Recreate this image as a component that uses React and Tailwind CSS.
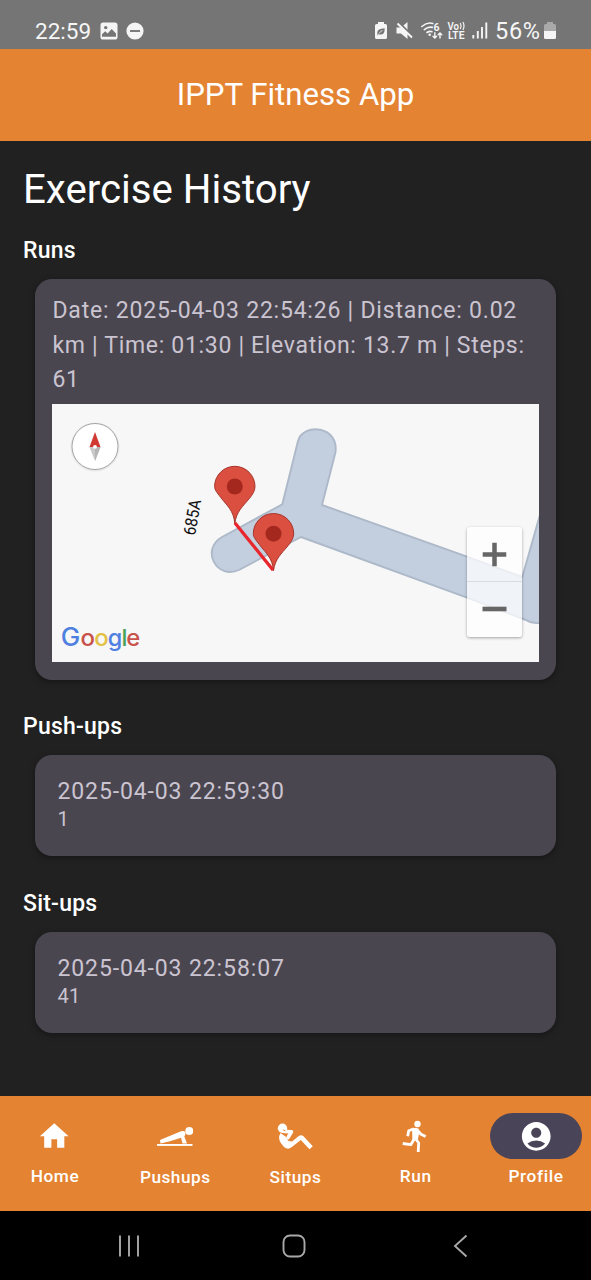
import React from "react";

function StatusBar() {
  return (
    <div className="flex h-[49px] items-start justify-between bg-[#757575] pl-[35px] pr-[35px] pt-[18px] text-[#f5f5f5]">
      <div className="flex h-[26px] items-center">
        <span className="w-[65px] text-[22.5px] leading-[26px]">22:59</span>
        <svg className="h-[18px] w-[18px]" viewBox="0 0 18 18">
          <rect x="0.5" y="0.5" width="17" height="17" rx="2.6" fill="#f5f5f5" />
          <circle cx="5.7" cy="5.6" r="1.7" fill="#757575" />
          <path d="M2 14.8v-2.6l3.2-3 2.4 2.2 4.1-4.3 4.3 4.5v3.2z" fill="#757575" />
        </svg>
        <svg className="ml-2 h-[18px] w-[18px]" viewBox="0 0 18 18">
          <circle cx="9" cy="9" r="8.6" fill="#f5f5f5" />
          <path d="M4 9h10" stroke="#757575" strokeWidth="1.9" />
        </svg>
      </div>
      <div className="flex h-[26px] items-center">
        <svg className="h-[26px] w-[121px]" viewBox="374 18 121 26">
          <path d="M378 22h6v2h1.500q1.500 0 1.500 1.500v12q0 1.500-1.500 1.500h-9q-1.500 0-1.500-1.500v-12q0-1.500 1.500-1.500h1.500z" fill="#f5f5f5" />
          <path d="M377.300 32.500q0-4 7.400-4.300q.2 6.400-4 6.400q-1.500 0-1.900-.6l-1.300 1.400" fill="#757575" />
          <path d="M379 33.500q1.500-2.500 3.500-3" stroke="#f5f5f5" strokeWidth=".8" fill="none" />
          <path d="M396.500 27.500h4.500l6.500-5.500v17l-6.500-5.500h-4.500z" fill="#f5f5f5" />
          <path d="M397.500 21l15 15" stroke="#757575" strokeWidth="2" />
          <path d="M397.500 23.500l14.500 14" stroke="#f5f5f5" strokeWidth="2" />
          <g fill="none" stroke="#f5f5f5" strokeWidth="1.600" strokeLinecap="round">
            <path d="M421.800 26.500q5.500-4.700 11-3M424.300 29.600q4-3.200 8-2.200M427 32.500q2.500-1.800 5-.8" />
            <path d="M434.800 32.800v5m-1.800-1.600 1.800 1.800 1.800-1.800M440 38v-5m-1.800 1.700 1.800-1.800 1.800 1.800" strokeWidth="1.400" />
          </g>
          <circle cx="429.700" cy="34.800" r="1.300" fill="#f5f5f5" />
          <text x="433.500" y="31" fontSize="10.500" fontWeight="700" fill="#f5f5f5">6</text>
          <text x="447.500" y="29.500" fontSize="10" fontWeight="600" fill="#f5f5f5" textLength="11.500" lengthAdjust="spacingAndGlyphs">Vo</text>
          <path d="M460.300 23q1.700 3 0 6M462.900 22q2.200 4 0 8" fill="none" stroke="#f5f5f5" strokeWidth="1.200" />
          <text x="448" y="39" fontSize="10.500" fontWeight="600" fill="#f5f5f5" textLength="16.500" lengthAdjust="spacingAndGlyphs">LTE</text>
          <path d="M473.300 35v3.500M477.800 31v7.500M482 27v11.500M486.300 22.500v16" stroke="#f5f5f5" strokeWidth="1.900" />
        </svg>
        <span className="w-[48px] whitespace-nowrap text-[23.5px] leading-[26px] tracking-[0.7px]">56%</span>
        <svg className="ml-px h-[18px] w-[12px]" viewBox="0 0 12 18">
          <path d="M3 0h6v2h1.500q1.500 0 1.500 1.500v6H0v-6q0-1.500 1.500-1.500H3z" fill="#a9a9a9" />
          <path d="M0 9h12v6.500q0 1.500-1.500 1.500h-9q-1.500 0-1.500-1.500z" fill="#f5f5f5" />
        </svg>
      </div>
    </div>
  );
}

function Pin({ x, y }) {
  return (
    <g transform={`translate(${x} ${y})`}>
      <path
        d="M0 37C-1 24-8 19-14 11C-18 6-20.200 3-20.200 0A20.200 20.200 0 0 1 20.200 0C20.200 4 18 8 14.500 12C8 20 1.500 25 0 37Z"
        fill="#db4f40"
        stroke="#a6352b"
        strokeWidth="1"
      />
      <circle r="8" fill="#a5281f" />
    </g>
  );
}

function RunMap() {
  return (
    <div className="relative h-[258px] w-[487px] overflow-hidden bg-[#f7f7f7]">
      <svg className="block h-[258px] w-[487px]" viewBox="52 404 487 258">
        <path
          d="M222 537L282.300 504.300L298 441C303 422 340 426 335.300 453L322 505L467 556.700L522.300 577L545 497V622Q534 625 526 620L467 597.700L301 537L239 570C217 580 200 550 222 537Z"
          fill="#c3cedf"
          stroke="#adb9c9"
          strokeWidth="1.900"
          strokeLinejoin="round"
        />
        <text transform="translate(195 536) rotate(-80)" fontSize="17" fill="#111" textLength="36" lengthAdjust="spacingAndGlyphs">685A</text>
        <path d="M235 523L273 570" stroke="#e8282e" strokeWidth="3.200" />
        <Pin x={234.800} y={486.500} />
        <Pin x={273.500} y={533.700} />
        <path d="M235 523L273 570" stroke="#e8282e" strokeWidth="2.600" />
        <circle cx="95" cy="447" r="24.500" fill="#000" opacity=".06" />
        <circle cx="95" cy="446.500" r="23" fill="#fff" stroke="#a5a5a5" strokeWidth="1" />
        <path d="M95 432L100.500 447H89.500Z" fill="#d03a32" />
        <path d="M95 461L100.500 447H89.500Z" fill="#c9c9c9" />
        <path d="M95 461V447H100.500Z" fill="#b5b5b5" />
        <circle cx="95" cy="446.800" r="1.900" fill="#fff" />
        <g fontFamily="Inter, sans-serif" fontSize="23.500" fontWeight="500">
          <text x="60.800" y="645.500" fill="#4f80e1" fontSize="25" textLength="19.500" lengthAdjust="spacingAndGlyphs">G</text>
          <text x="80.500" y="645.500" fill="#c9524b" textLength="14.500" lengthAdjust="spacingAndGlyphs">o</text>
          <text x="94.200" y="645.500" fill="#e3c145" textLength="14.500" lengthAdjust="spacingAndGlyphs">o</text>
          <text x="107.800" y="645.500" fill="#4f80e1" textLength="14.500" lengthAdjust="spacingAndGlyphs">g</text>
          <text x="121.400" y="645.500" fill="#4aa256">l</text>
          <text x="126.200" y="645.500" fill="#c9524b" textLength="14" lengthAdjust="spacingAndGlyphs">e</text>
        </g>
      </svg>
      <div className="absolute right-[17px] bottom-[25px] flex h-[110px] w-[55px] flex-col divide-y divide-[#d8dbdf] rounded-[3px] bg-white/75 text-[#666] shadow-[0_1px_3px_rgba(0,0,0,0.35)]">
        <svg className="h-[55px] w-[55px]" viewBox="0 0 55 55">
          <path d="M15.500 28h24M27.500 16v24" stroke="#666" strokeWidth="4.600" />
        </svg>
        <svg className="h-[55px] w-[55px]" viewBox="0 0 55 55">
          <path d="M15.500 27h24" stroke="#666" strokeWidth="4.600" />
        </svg>
      </div>
    </div>
  );
}

function RepCard({ date, count }) {
  return (
    <div className="ml-[11.5px] h-[101px] w-[521.5px] rounded-[17px] bg-[#4a4650] pl-[23px] pt-[20px] text-[#cac4d0] shadow-[0_2px_6px_rgba(0,0,0,0.35)]">
      <p className="text-[23px] leading-[34px] tracking-[0.88px]">{date}</p>
      <p className="-mt-[2px] text-[20px] leading-[24px] tracking-[0.36px]">{count}</p>
    </div>
  );
}

function NavItem({ label, active, low, children }) {
  return (
    <div className="flex w-[109px] flex-col items-center pt-[17px] text-white">
      <div className={active ? "flex h-[46px] w-[92px] items-center justify-center rounded-full bg-[#4a4458] pl-px" : "flex h-[46px] w-[92px] items-center justify-center"}>
        {children}
      </div>
      <span className={low ? "mt-[7px] pl-px text-[17.25px] leading-[23px] font-medium tracking-[0.5px]" : "mt-[6px] pl-px text-[17.25px] leading-[23px] font-medium tracking-[0.6px]"}>
        {label}
      </span>
    </div>
  );
}

const ICON = "h-[34.5px] w-[34.5px] fill-white";

export default function App() {
  return (
    <div className="flex h-[1280px] w-[591px] flex-col overflow-hidden bg-[#212121] font-[Roboto,sans-serif] text-white">
      <StatusBar />
      <header className="flex h-[91.5px] items-center justify-center bg-[#e48332]">
        <h1 className="text-[31.200px] leading-[40px]">IPPT Fitness App</h1>
      </header>
      <main className="flex-1 pl-[23px]">
        <h2 className="pt-[23px] text-[40.200px] leading-[52px]">Exercise History</h2>
        <h3 className="mt-[18px] text-[23px] leading-[34.5px] font-medium tracking-[0.22px]">Runs</h3>
        <section className="mt-[11px] ml-[11.5px] h-[401px] w-[521.5px] rounded-[17px] bg-[#4a4650] pl-[17.5px] pt-[15px] shadow-[0_2px_6px_rgba(0,0,0,0.35)]">
          <p className="h-[110px] w-[487px] pl-[0.5px] text-[23px] leading-[34.5px] tracking-[0.68px] text-[#cac4d0]">
            <span className="tracking-[0.78px]">Date: 2025-04-03 22:54:26 | Distance: 0.02</span>{" "}
            km | Time: 01:30 | Elevation: 13.7 m | Steps: 61
          </p>
          <RunMap />
        </section>
        <h3 className="mt-[30px] mb-[10.5px] text-[23px] leading-[34.5px] font-medium tracking-[0.22px]">Push-ups</h3>
        <RepCard date="2025-04-03 22:59:30" count="1" />
        <h3 className="mt-[31px] mb-[10.5px] text-[23px] leading-[34.5px] font-medium tracking-[0.22px]">Sit-ups</h3>
        <RepCard date="2025-04-03 22:58:07" count="41" />
      </main>
      <nav className="flex h-[115px] shrink-0 justify-between bg-[#e48332] pr-px">
        <NavItem label="Home">
          <svg className={ICON} viewBox="0 0 24 24"><path d="M10 20v-6h4v6h5v-8h3L12 3 2 12h3v8z" /></svg>
        </NavItem>
        <NavItem label="Pushups" low>
          <svg className="h-[34px] w-[36px]" viewBox="157 1119 36 34">
            <rect x="157" y="1144" width="35.500" height="1.900" fill="#fff" />
            <circle cx="189.300" cy="1131" r="4" fill="#fff" />
            <path d="M160 1140L181 1131.200Q184 1130.300 185.300 1132Q186.300 1134 184.300 1136.500L187 1143.500H182.500L181 1137.800L170 1141.200L160.500 1143.500Z" fill="#fff" />
          </svg>
        </NavItem>
        <NavItem label="Situps" low>
          <svg className="h-[34px] w-[36px]" viewBox="277 1119 36 34">
            <circle cx="282.500" cy="1128.300" r="4.700" fill="#fff" />
            <path d="M284.500 1131.500L291.500 1131.800L288 1137.500" fill="none" stroke="#fff" strokeWidth="3.600" strokeLinecap="round" strokeLinejoin="round" />
            <path d="M280.500 1133Q277.500 1138 281 1143.300L284 1147Q288.500 1150.500 292.500 1146.500L300.800 1140L309.500 1149.300L312.800 1146.300L303 1135.800Q300.800 1134.500 298.500 1136.200L292 1141.500L288.500 1141L285.500 1136.500Z" fill="#fff" />
            <path d="M283 1129.800l2.500 1.200M284.800 1134.500l2.300 1.500" stroke="#e48332" strokeWidth=".9" />
          </svg>
        </NavItem>
        <NavItem label="Run">
          <svg className="h-[34px] w-[36px]" viewBox="397.500 1119 36 34">
            <circle cx="418" cy="1124" r="3.200" fill="#fff" />
            <path d="M412.500 1128.500L417 1127.700Q419.500 1128 420 1131L418.300 1140L413 1141Z" fill="#fff" />
            <path d="M408.200 1136.300L409.200 1130.700L414.500 1128.800M419 1131.500L421.500 1134.300L426.200 1136.500M403.200 1143.500L411.300 1144.700L414.700 1139M416 1138.500L419.200 1143L418.700 1152" fill="none" stroke="#fff" strokeWidth="2.800" strokeLinejoin="round" />
          </svg>
        </NavItem>
        <NavItem label="Profile" active>
          <svg className={ICON} viewBox="0 0 24 24"><path d="M12 2C6.480 2 2 6.480 2 12s4.480 10 10 10 10-4.480 10-10S17.520 2 12 2zm0 4c1.930 0 3.500 1.570 3.500 3.500S13.930 13 12 13s-3.500-1.570-3.500-3.500S10.070 6 12 6zm0 14c-2.030 0-4.430-.82-6.140-2.880a9.947 9.947 0 0 1 12.280 0C16.430 19.180 14.030 20 12 20z" /></svg>
        </NavItem>
      </nav>
      <footer className="flex h-[69px] shrink-0 items-center bg-black pl-[118px]">
        <svg className="h-6 w-[23px]" viewBox="0 0 23 24">
          <path d="M2 1.500v21M11 1.500v21M20 1.500v21" stroke="#a8a8a8" strokeWidth="1.900" />
        </svg>
        <svg className="ml-[141px] h-6 w-6" viewBox="0 0 24 24">
          <rect x="1.500" y="1.500" width="21" height="21" rx="6.500" fill="none" stroke="#a8a8a8" strokeWidth="1.900" />
        </svg>
        <svg className="ml-[147px] h-6 w-[16px]" viewBox="0 0 16 24">
          <path d="M13.500 1.500L2 12L13.500 22.500" fill="none" stroke="#a8a8a8" strokeWidth="1.900" />
        </svg>
      </footer>
    </div>
  );
}
